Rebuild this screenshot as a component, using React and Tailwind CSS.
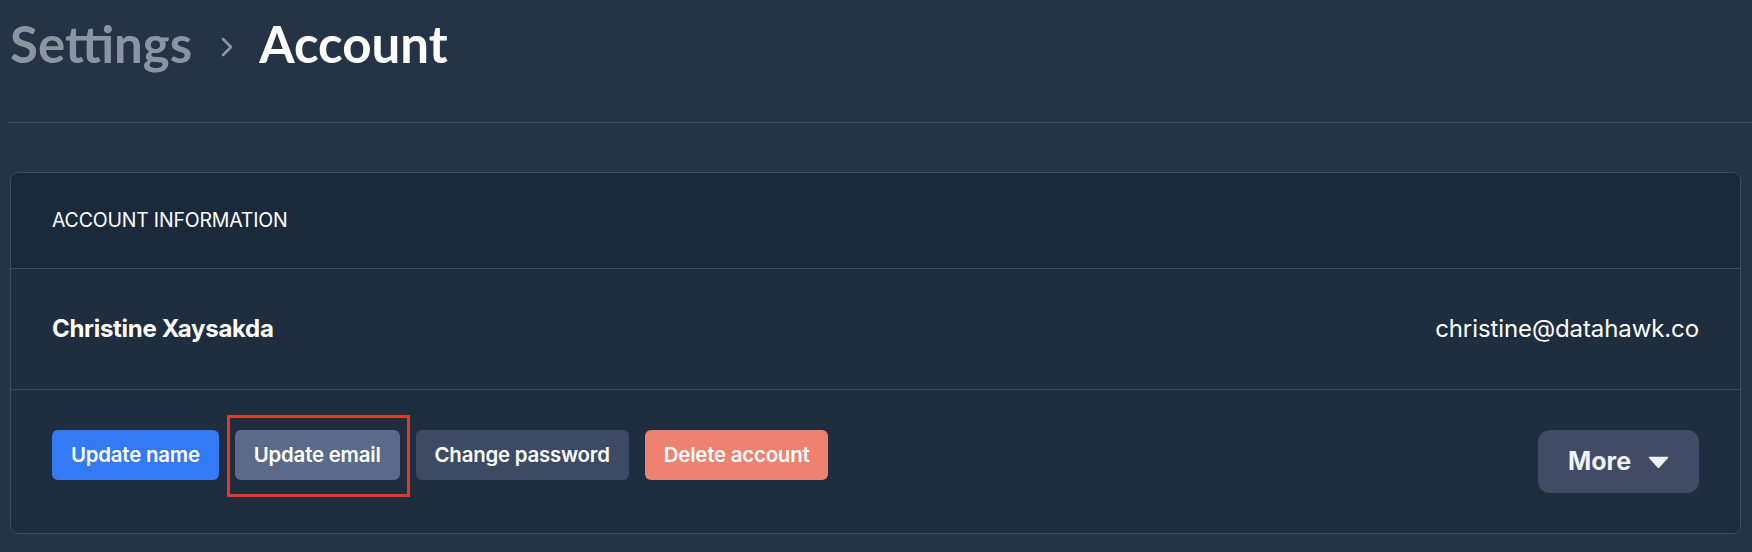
function Chevron() {
  return (
    <svg width="12" height="20" viewBox="0 0 12 20" fill="none" className="mt-[6px]">
      <path d="M2 2l8 8-8 8" stroke="#8a95a1" strokeWidth="2.6" strokeLinecap="round" strokeLinejoin="round" />
    </svg>
  );
}

function Caret() {
  return (
    <svg width="21" height="12" viewBox="0 0 21 12">
      <path d="M1.5 1.5h18l-9 10z" fill="#eef2f7" stroke="#eef2f7" strokeWidth="1.5" strokeLinejoin="round" />
    </svg>
  );
}

export default function App() {
  const btn = "h-[50px] px-[19px] rounded-[6px] text-white text-[20.4px] font-semibold tracking-[-0.2px] flex items-center";

  return (
    <div className="w-[1752px] h-[552px] bg-[#243446] pl-[10px] pr-[11px] font-['Inter',sans-serif] overflow-hidden">
      <div className="flex items-center pt-[14px] h-[74px] font-['Lato',sans-serif] font-bold text-[51px] leading-[60px]">
        <span className="text-[#8a95a1]">Settings</span>
        <span className="ml-[29px] mr-[26px] flex items-center">
          <Chevron />
        </span>
        <span className="text-white">Account</span>
      </div>

      <div className="mt-[48px] -ml-[2px] -mr-[11px] h-[1px] bg-[#3d4a63]" />

      <div className="mt-[49px] border border-[#3d4a63] rounded-[8px] overflow-hidden">
        <div className="h-[95px] bg-[#1b2a3b] px-[41px] flex items-center">
          <span className="text-white text-[19.5px] tracking-[-0.2px]">ACCOUNT INFORMATION</span>
        </div>

        <div className="h-[121px] bg-[#1e2e3f] border-t border-[#3d4a63] px-[41px] flex items-center justify-between">
          <span className="text-white text-[24px] font-bold tracking-[-0.3px]">Christine Xaysakda</span>
          <span className="text-white text-[24px] tracking-[-0.1px]">christine@datahawk.co</span>
        </div>

        <div className="bg-[#1e2e3f] border-t border-[#3d4a63] px-[41px] py-[40px] flex items-start justify-between">
          <div className="flex items-center gap-[16px]">
            <button className={`${btn} bg-[#3479f6]`}>Update name</button>
            <div className="relative">
              <button className={`${btn} bg-[#5b6a89]`}>Update email</button>
              <span className="absolute -left-[8px] -right-[10px] -top-[15px] -bottom-[17px] border-[3px] border-[#e23a22] pointer-events-none" />
            </div>
            <button className={`${btn} bg-[#3c4a64]`}>Change password</button>
            <button className={`${btn} bg-[#ef8170]`}>Delete account</button>
          </div>
          <button className="h-[63px] w-[161px] rounded-[12px] bg-[#404c66] text-[#eef2f7] text-[25px] font-bold flex items-center justify-center gap-[17px]">
            More
            <Caret />
          </button>
        </div>
      </div>
    </div>
  );
}
